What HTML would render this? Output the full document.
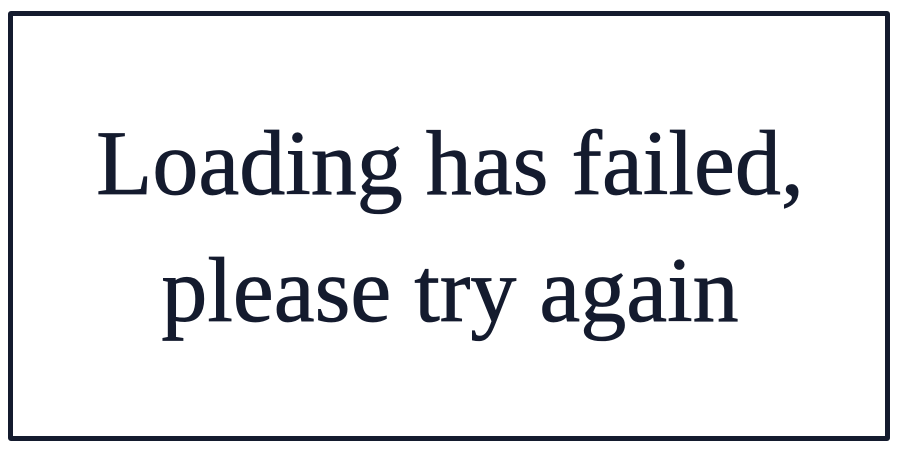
<!DOCTYPE html>
<html><head><style>
html,body{margin:0;padding:0;width:900px;height:450px;background:#fff;overflow:hidden}
.box{position:absolute;left:8px;top:11px;width:872px;height:420px;border:5px solid #141b2e;border-radius:3px}
.t{position:absolute;left:0;width:900px;text-align:center;font-family:"Liberation Serif",serif;font-size:92px;color:#141b2e;line-height:1;-webkit-text-stroke:0.8px #141b2e}
</style></head><body>
<div class="box"></div>
<div class="t" style="top:117px">Loading has failed,</div>
<div class="t" style="top:244px">please try again</div>
</body></html>
